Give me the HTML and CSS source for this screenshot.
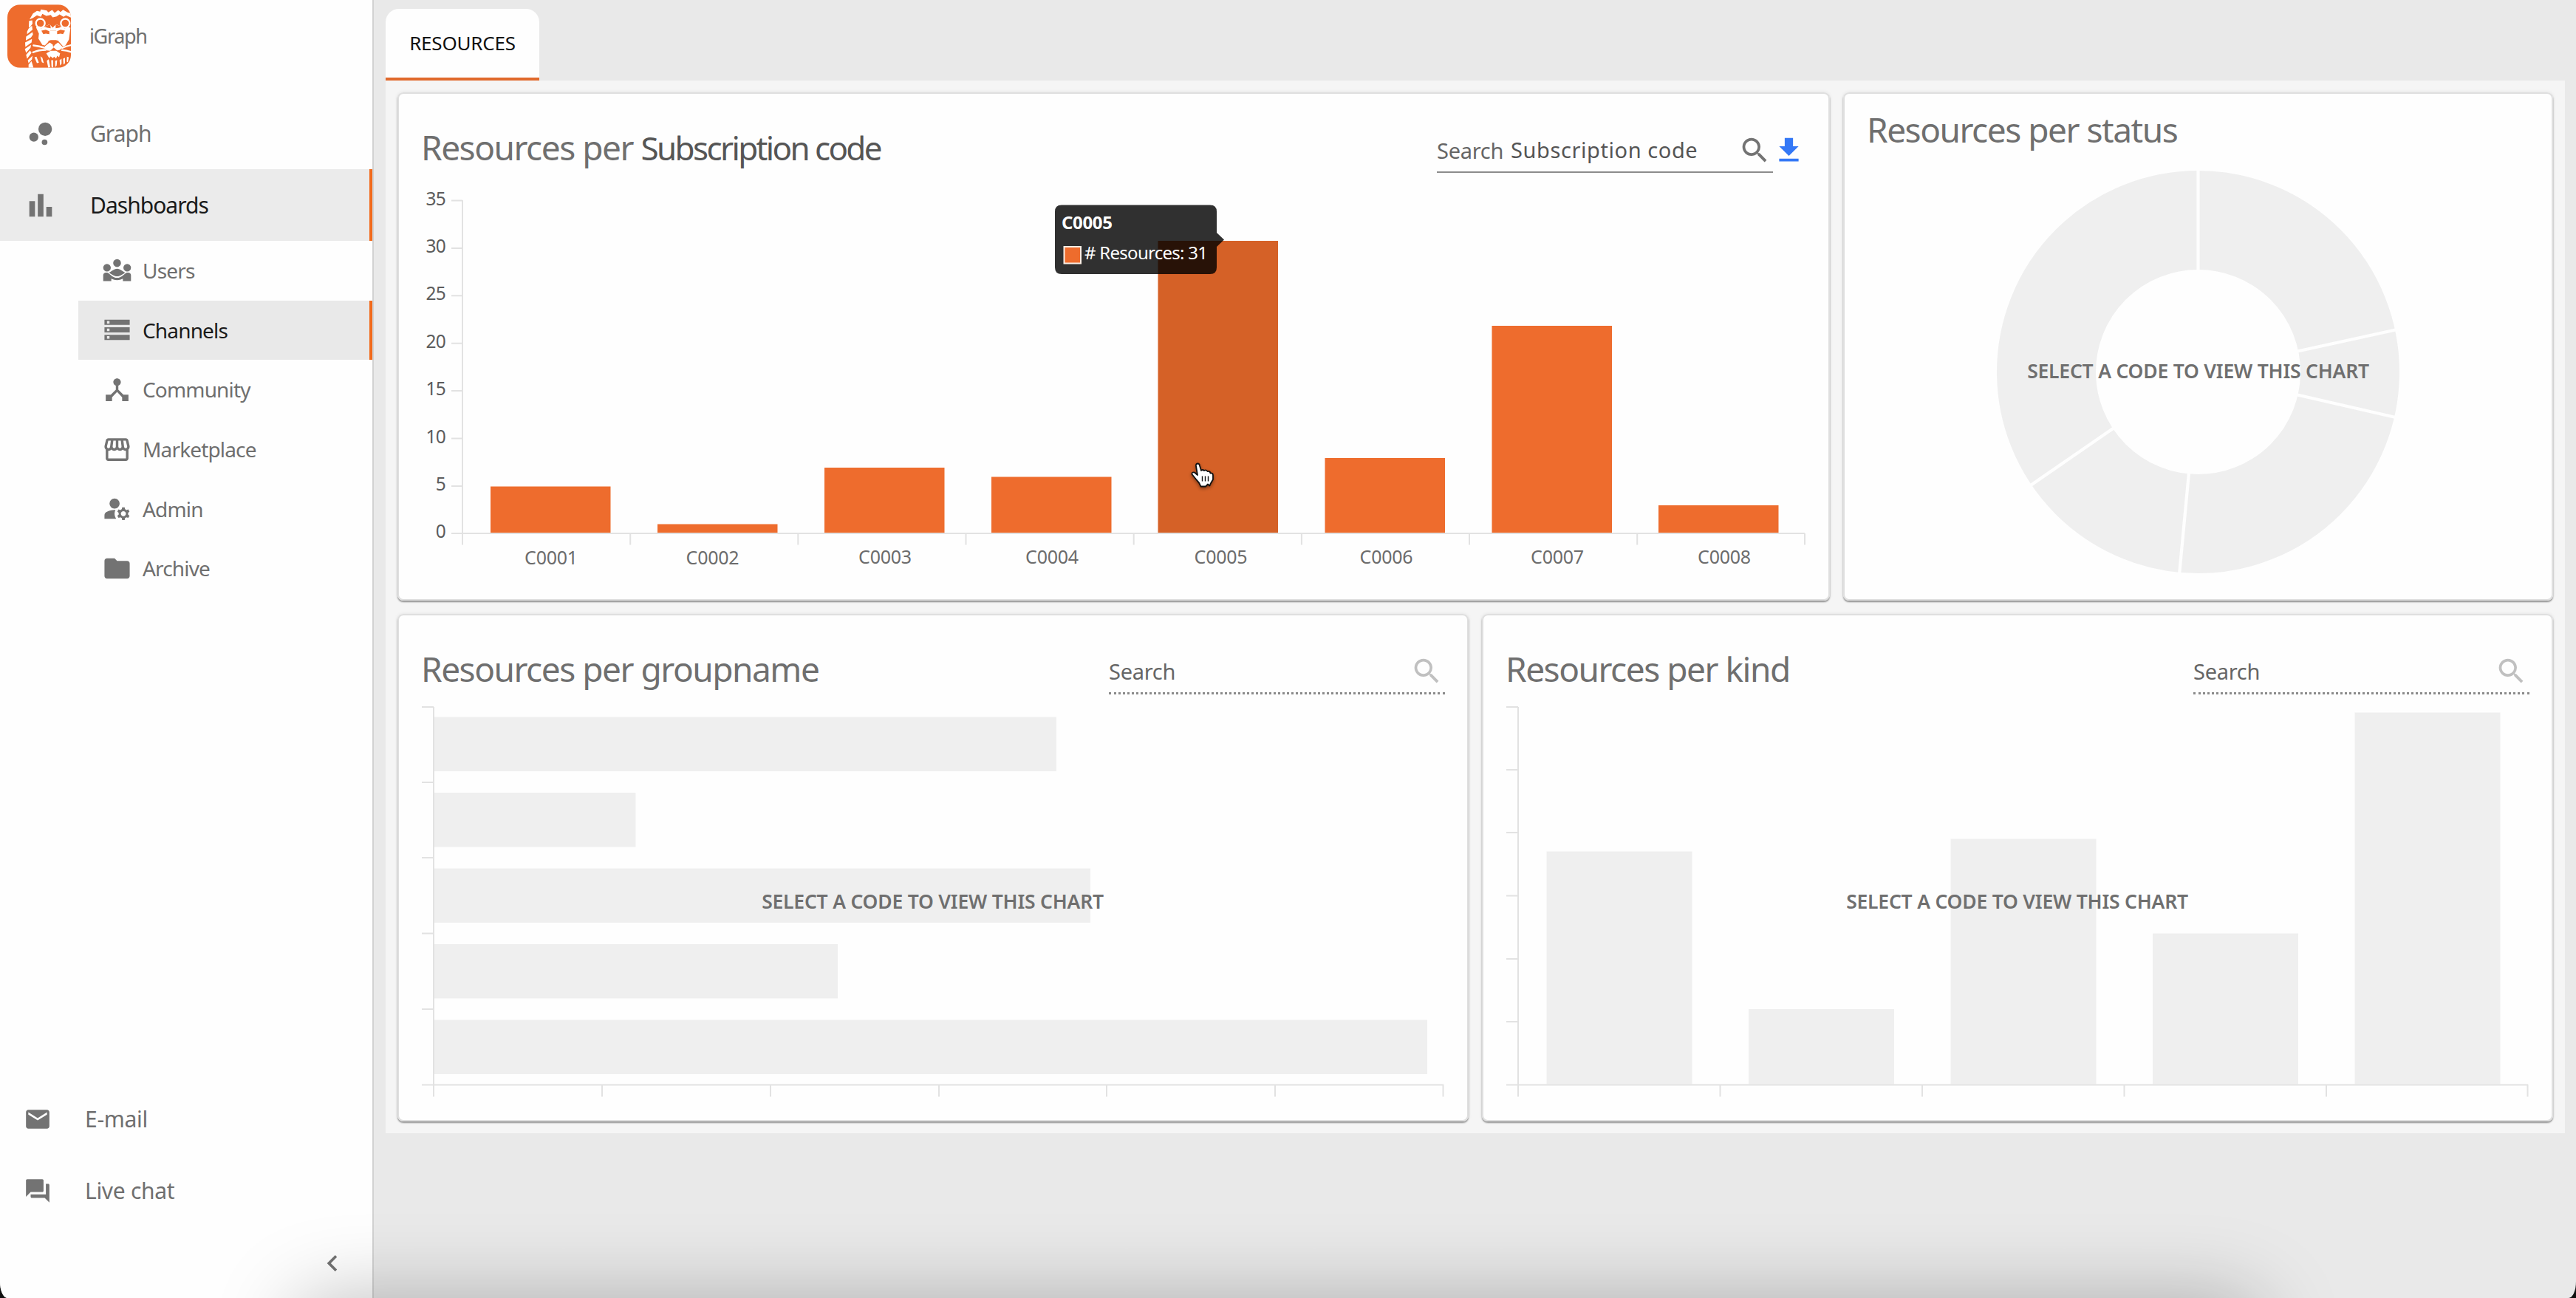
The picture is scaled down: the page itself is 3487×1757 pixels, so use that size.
FILE: index.html
```html
<!DOCTYPE html>
<html lang="en">
<head>
<meta charset="utf-8">
<title>iGraph</title>
<link rel="stylesheet" href="styles.css">
</head>
<body>
<div class="app">
  <aside class="sidebar">
    <div class="brand">
      <svg class="logo" viewBox="30 18 258 257">
        <defs><clipPath id="tile"><rect x="30" y="18" width="258" height="257" rx="52"/></clipPath></defs>
        <g clip-path="url(#tile)">
          <rect x="30" y="18" width="258" height="257" fill="#ee6c2d"/>
          <g fill="#fff">
            <path d="M120 78L134 54L150 44L163 47L166 38L190 42L196 50L212 40L222 52L236 41L246 48L256 39L274 50L290 54L290 72L268 62L258 68L242 58L230 66L214 70L206 60L188 64L172 56L166 68L150 62L134 72Z"/>
            <path d="M118 84L131 82L132 96L120 112L117 108ZM116 116L130 104L132 120L110 138L110 128ZM106 148L132 130L134 140L126 152L105 164ZM102 172L130 158L128 172L103 190ZM101 198L126 182L124 194L106 214ZM106 222L122 204L128 214L110 238ZM113 244L132 226L130 240L116 256ZM116 262L128 248L136 275L116 275Z"/>
            <path d="M146 110L160 106L166 116L184 106L202 98L214 112L228 98L246 106L264 116L272 108L286 112L280 160L266 184L256 188L240 170L232 160L228 124L204 124L202 160L194 172L182 184L172 182L156 156L158 136Z"/>
            <path d="M204 124H230L234 164L216 172L198 164Z"/>
            <path d="M182 188L202 172L214 180L216 190L224 180L236 172L254 190L244 202L232 204L218 192L204 206L190 204Z"/>
            <path d="M188 216L206 206H228L244 216L240 232L232 226L228 237L220 230L214 236L206 228L200 236L194 226Z"/>
            <path d="M140 232L148 230L158 254L150 256ZM164 228L172 234L178 256L170 252ZM190 246L198 240L204 272L196 275ZM208 244L216 244L216 275L209 270ZM224 246L232 244L230 266L224 272ZM242 244L250 238L250 258L244 266ZM256 238L264 234L264 256L258 262ZM272 230L279 232L276 252L271 250Z"/>
          </g>
          <g fill="none" stroke="#fff" stroke-width="7" stroke-linecap="round">
            <circle cx="164" cy="94" r="18"/><circle cx="265" cy="94" r="18"/>
            <path d="M136 184Q158 186 184 194M134 212Q158 202 186 202M252 194Q270 186 292 182M252 203Q272 204 292 212"/>
          </g>
          <g fill="#ee6c2d">
            <path d="M168 124L186 120L200 126L200 138L186 136L176 138Z"/><path d="M232 126L246 120L264 124L256 138L246 136L232 138Z"/>
            <path d="M196 166L206 162H228L236 166L218 182Z"/>
            <path d="M180 108L204 98L206 114L192 112ZM226 98L250 108L240 112L226 114Z"/>
          </g>
        </g>
      </svg>
      <span class="brand-name">iGraph</span>
    </div>
    <nav class="nav">
      <a class="nav-item">
        <svg class="icon" viewBox="0 0 24 24"><circle cx="7.2" cy="14.4" r="3.2"/><circle cx="14.8" cy="18" r="2"/><circle cx="15.2" cy="8.8" r="4.8"/></svg>
        <span>Graph</span>
      </a>
      <a class="nav-item active">
        <svg class="icon" viewBox="0 0 24 24"><path d="M4 9h4v11H4zM16 13h4v7h-4zM10 4h4v16h-4z"/></svg>
        <span>Dashboards</span>
      </a>
      <div class="subnav">
        <a class="sub-item">
          <svg class="icon" viewBox="0 0 24 24"><circle cx="4" cy="9.6" r="3"/><circle cx="12" cy="5.9" r="3.1"/><circle cx="20" cy="9.6" r="3"/><path d="M5.6 13.6C8 12 10 10.4 12 10.4s4 1.600 6.400 3.200C16.500 14.600 14.500 16.400 12 16.400s-4.500-1.800-6.400-2.800z"/><path d="M1 20.200V15.500C1 14.200 2 13.400 3.200 13.400H4.200C6 14 8.500 17.600 12 17.600s6-3.600 7.800-4.200H20.800C22 13.400 23 14.200 23 15.500V20.200H16.600V18.300Q12 20.600 7.400 18.300V20.200Z"/></svg>
          <span>Users</span>
        </a>
        <a class="sub-item active">
          <svg class="icon" viewBox="0 0 24 24"><path d="M2 20h20v-4H2v4zm2-3h2v2H4v-2zM2 4v4h20V4H2zm4 3H4V5h2v2zm-4 7h20v-4H2v4zm2-3h2v2H4v-2z"/></svg>
          <span>Channels</span>
        </a>
        <a class="sub-item">
          <svg class="icon" viewBox="0 0 24 24"><path d="M17 16l-4-4V8.82C14.16 8.4 15 7.3 15 6c0-1.66-1.34-3-3-3S9 4.340 9 6c0 1.300.84 2.400 2 2.820V12l-4 4H3v5h5v-3.050l4-4.200 4 4.200V21h5v-5h-4z"/></svg>
          <span>Community</span>
        </a>
        <a class="sub-item">
          <svg class="icon" viewBox="0 0 24 24"><path d="M21.9 8.89l-1.05-4.37c-.22-.9-1-1.52-1.91-1.52H5.05c-.9 0-1.69.63-1.9 1.52L2.100 8.890c-.24 1.020-.02 2.060.62 2.880.08.11.19.19.28.29V19c0 1.100.9 2 2 2h14c1.100 0 2-.9 2-2v-6.940c.09-.09.2-.18.28-.28.64-.82.87-1.870.62-2.890zm-2.990-3.900l1.050 4.370c.1.420.01.840-.25 1.170-.14.180-.44.470-.94.470-.61 0-1.140-.49-1.210-1.140L16.980 5l1.930-.01zM13 5h1.960l.54 4.520c.05.390-.07.780-.33 1.070-.22.260-.54.410-.95.410-.67 0-1.220-.59-1.220-1.310V5zM8.490 9.520L9.040 5H11v4.690c0 .72-.55 1.310-1.290 1.310-.34 0-.65-.15-.89-.41-.25-.29-.37-.68-.33-1.070zm-4.450-.16L5.050 5h1.970l-.58 4.860c-.08.650-.6 1.140-1.210 1.140-.49 0-.8-.29-.93-.47-.27-.32-.36-.75-.26-1.170zM5 19v-6.030c.08.010.15.030.23.030.87 0 1.660-.36 2.240-.95.600.600 1.400.95 2.310.95.87 0 1.650-.36 2.230-.93.59.570 1.390.930 2.290.930.84 0 1.640-.35 2.240-.95.58.590 1.370.950 2.240.950.08 0 .15-.02.23-.03V19H5z"/></svg>
          <span>Marketplace</span>
        </a>
        <a class="sub-item">
          <svg class="icon" viewBox="0 0 24 24"><circle cx="10" cy="8" r="4"/><path d="M10.670 13.020C10.450 13.010 10.230 13 10 13c-2.420 0-4.680.67-6.610 1.820-.88.52-1.390 1.500-1.390 2.530V20h9.260c-.79-1.130-1.260-2.510-1.260-4 0-1.070.25-2.070.67-2.980zM20.750 16c0-.22-.03-.42-.06-.63l1.140-1.010-1-1.730-1.450.49c-.32-.27-.68-.48-1.080-.63L18 11h-2l-.3 1.490c-.4.150-.76.360-1.080.630l-1.450-.49-1 1.730 1.140 1.010c-.03.210-.06.410-.06.630s.03.420.06.630l-1.140 1.010 1 1.730 1.450-.49c.32.270.68.480 1.080.630L16 21h2l.3-1.490c.4-.15.76-.36 1.080-.63l1.450.49 1-1.730-1.140-1.010c.03-.21.06-.41.06-.63zM17 18c-1.100 0-2-.9-2-2s.9-2 2-2 2 .9 2 2-.9 2-2 2z"/></svg>
          <span>Admin</span>
        </a>
        <a class="sub-item">
          <svg class="icon" viewBox="0 0 24 24"><path d="M10 4H4c-1.100 0-1.990.9-1.990 2L2 18c0 1.100.9 2 2 2h16c1.100 0 2-.9 2-2V8c0-1.100-.9-2-2-2h-8l-2-2z"/></svg>
          <span>Archive</span>
        </a>
      </div>
    </nav>
    <div class="contact">
      <a class="contact-item">
        <svg class="icon" viewBox="0 0 24 24"><path d="M20 4H4c-1.100 0-1.990.9-1.990 2L2 18c0 1.100.9 2 2 2h16c1.100 0 2-.9 2-2V6c0-1.100-.9-2-2-2zm0 4l-8 5-8-5V6l8 5 8-5v2z"/></svg>
        <span>E-mail</span>
      </a>
      <a class="contact-item">
        <svg class="icon" viewBox="0 0 24 24"><path d="M21 6h-2v9H6v2c0 .55.45 1 1 1h11l4 4V7c0-.55-.45-1-1-1zm-4 6V3c0-.55-.45-1-1-1H3c-.55 0-1 .45-1 1v14l4-4h10c.55 0 1-.45 1-1z"/></svg>
        <span>Live chat</span>
      </a>
      <div class="collapse">
        <svg class="icon" viewBox="0 0 24 24"><path d="M15.410 7.410L14 6l-6 6 6 6 1.410-1.410L10.830 12z"/></svg>
      </div>
    </div>
  </aside>

  <main class="main">
    <div class="tabs"><div class="tab"><span>RESOURCES</span></div></div>
    <div class="panel">
      <div class="row row-top">
        <section class="card">
          <header class="card-head">
            <h2 class="title"><span>Resources per</span> <span class="title-code">Subscription code</span></h2>
            <div class="tools">
              <div class="search search-on">
                <span>Search</span><span class="search-code">Subscription code</span>
                <svg class="icon" viewBox="0 0 24 24"><path d="M15.500 14h-.79l-.28-.27A6.471 6.471 0 0 0 16 9.500 6.500 6.500 0 1 0 9.500 16c1.610 0 3.090-.59 4.230-1.570l.27.280v.790l5 4.990L20.490 19l-4.990-5zm-6 0C7.010 14 5 11.990 5 9.500S7.010 5 9.500 5 14 7.010 14 9.500 11.990 14 9.500 14z"/></svg>
              </div>
              <svg class="icon download" viewBox="0 0 24 24"><path d="M19 9h-4V3H9v6H5l7 7 7-7zM5 18v2h14v-2H5z"/></svg>
            </div>
          </header>
          <svg class="chart" viewBox="570 234 1875 560" width="1875" height="560">
            <path class="axis" d="M626 271V737.500M611 722H2443M611 271.500H626M611 335.900H626M611 400.300H626M611 464.700H626M611 529.100H626M611 593.500H626M611 657.900H626M853.200 722V737.500M1080.300 722V737.500M1307.500 722V737.500M1534.700 722V737.500M1761.900 722V737.500M1989 722V737.500M2216.200 722V737.500M2443 722V737.500"/>
            <g class="bars">
              <rect x="664" y="658.500" width="162.500" height="62.500"/>
              <rect x="890" y="709.500" width="162.500" height="11.500"/>
              <rect x="1116" y="633" width="162.500" height="88"/>
              <rect x="1342" y="645.500" width="162.500" height="75.500"/>
              <rect class="hover" x="1567.500" y="326" width="162.500" height="395"/>
              <rect x="1793.500" y="620" width="162.500" height="101"/>
              <rect x="2019.500" y="441" width="162.500" height="280"/>
              <rect x="2245" y="684" width="162.500" height="37"/>
            </g>
            <g class="y-labels">
              <text x="603" y="277.500">35</text><text x="603" y="342">30</text><text x="603" y="406.300">25</text><text x="603" y="470.700">20</text><text x="603" y="535">15</text><text x="603" y="599.500">10</text><text x="603" y="663.500">5</text><text x="603" y="728">0</text>
            </g>
            <g class="x-labels">
              <text x="746" y="764">C0001</text><text x="964.500" y="764">C0002</text><text x="1198" y="763">C0003</text><text x="1424" y="763">C0004</text><text x="1652.500" y="763">C0005</text><text x="1876.500" y="763">C0006</text><text x="2108" y="763">C0007</text><text x="2334" y="763">C0008</text>
            </g>
            <g class="tooltip">
              <path d="M1437 277.500H1638Q1647 277.500 1647 286.500V315L1657 324.500L1647 334V362Q1647 371 1638 371H1437Q1428 371 1428 362V286.500Q1428 277.500 1437 277.500Z"/>
              <text class="tip-title" x="1437" y="309.500">C0005</text>
              <rect x="1440.500" y="334" width="22.500" height="22.500"/>
              <text class="tip-text" x="1468" y="351"># Resources: 31</text>
            </g>
            <g class="pointer">
              <path d="M1620 650L1613.500 642Q1613 638.500 1617 639.500L1621 643L1619 631Q1618.500 627.500 1621.500 627.500Q1623.500 627.500 1624 630.500L1626 637Q1627.500 635 1630 637Q1632.500 635.500 1634.500 638Q1638 637.500 1638.500 640.500Q1642 640 1642 643.500V649L1638.500 655L1637.500 657.500L1635 655.500L1632 658.500H1625.500Q1623.500 653 1620 650Z"/>
              <path d="M1627.500 644.500V651.500M1631.500 644.500V651.500M1635.500 644.500V651.500"/>
            </g>
          </svg>
        </section>

        <section class="card card-status">
          <header class="card-head"><h2 class="title">Resources per status</h2></header>
          <svg class="chart" viewBox="2527 225 897 560" width="897" height="560">
            <circle cx="2975.500" cy="503.500" r="205.500" fill="none" stroke="#efefef" stroke-width="134"/>
            <path d="M2975.500 225V366M3110 475.500L3245 446M3110 534.500L3245 565.500M2963 640L2950 778M2861 579.500L2748 657.500" stroke="#fefefe" stroke-width="4.200"/>
            <text class="hint" x="2975.500" y="512">SELECT A CODE TO VIEW THIS CHART</text>
          </svg>
        </section>
      </div>

      <div class="row row-bottom">
        <section class="card">
          <header class="card-head">
            <h2 class="title">Resources per groupname</h2>
            <div class="search">
              <span>Search</span>
              <svg class="icon" viewBox="0 0 24 24"><path d="M15.500 14h-.79l-.28-.27A6.471 6.471 0 0 0 16 9.500 6.500 6.500 0 1 0 9.500 16c1.610 0 3.090-.59 4.230-1.570l.27.280v.790l5 4.990L20.490 19l-4.990-5zm-6 0C7.010 14 5 11.990 5 9.500S7.010 5 9.500 5 14 7.010 14 9.500 11.990 14 9.500 14z"/></svg>
            </div>
          </header>
          <svg class="chart" viewBox="570 940 1386 560" width="1386" height="560">
            <g fill="#efefef">
              <rect x="588" y="970.500" width="842" height="73.500"/>
              <rect x="588" y="1073" width="272.500" height="73.500"/>
              <rect x="588" y="1175.500" width="888" height="73.500"/>
              <rect x="588" y="1278" width="546" height="73.500"/>
              <rect x="588" y="1380.500" width="1344" height="73.500"/>
            </g>
            <path class="axis" d="M587 957V1484.500M571 1468.500H1954M571 957H587M571 1059H587M571 1161H587M571 1263.500H587M571 1366H587M815 1468V1484.500M1043 1468V1484.500M1271 1468V1484.500M1498 1468V1484.500M1726 1468V1484.500M1953.500 1468V1484.500"/>
            <text class="hint" x="1262.500" y="1230">SELECT A CODE TO VIEW THIS CHART</text>
          </svg>
        </section>

        <section class="card">
          <header class="card-head">
            <h2 class="title">Resources per kind</h2>
            <div class="search">
              <span>Search</span>
              <svg class="icon" viewBox="0 0 24 24"><path d="M15.500 14h-.79l-.28-.27A6.471 6.471 0 0 0 16 9.500 6.500 6.500 0 1 0 9.500 16c1.610 0 3.090-.59 4.230-1.570l.27.280v.790l5 4.990L20.490 19l-4.990-5zm-6 0C7.010 14 5 11.990 5 9.500S7.010 5 9.500 5 14 7.010 14 9.500 11.990 14 9.500 14z"/></svg>
            </div>
          </header>
          <svg class="chart" viewBox="2038 940 1386 560" width="1386" height="560">
            <g fill="#efefef">
              <rect x="2093.500" y="1152.500" width="197" height="315"/>
              <rect x="2367" y="1366" width="197" height="101.500"/>
              <rect x="2640.500" y="1135.500" width="197" height="332"/>
              <rect x="2914" y="1263.500" width="197" height="204"/>
              <rect x="3187.500" y="964.500" width="197" height="503"/>
            </g>
            <path class="axis" d="M2055 957V1484.500M2039 1468.500H3422M2039 957H2055M2039 1042H2055M2039 1127H2055M2039 1212.500H2055M2039 1298H2055M2039 1383H2055M2328.500 1468V1484.500M2602 1468V1484.500M2875.500 1468V1484.500M3149 1468V1484.500M3421.500 1468V1484.500"/>
            <text class="hint" x="2730.500" y="1230">SELECT A CODE TO VIEW THIS CHART</text>
          </svg>
        </section>
      </div>
    </div>
  </main>
  <div class="edge-shade"></div>
</div>
</body>
</html>
```
FILE: styles.css
```css
* { box-sizing: border-box; }

body {
  margin: 0;
  background: #111;
  color: #6f6f6f;
  font-family: "Noto Sans", sans-serif;
}

.app {
  position: relative;
  display: flex;
  width: 3487px;
  height: 1757px;
  overflow: hidden;
  background: #e9e9e9;
  border-radius: 0 0 10px 10px / 0 0 22px 22px;
}

.icon { flex: none; fill: #737373; }

/* Sidebar */
.sidebar {
  display: flex;
  flex-direction: column;
  width: 506px;
  background: #fefefe;
  border-right: 2px solid #d2d2d2;
}

.brand {
  display: flex;
  align-items: flex-start;
  gap: 25px;
  height: 132px;
  padding: 6px 10px;
}

.logo { width: 86px; height: 86px; }

.brand-name {
  font-size: 27px;
  line-height: 86px;
  letter-spacing: -0.05em;
}

.nav-item {
  display: flex;
  align-items: center;
  gap: 44px;
  height: 97px;
  padding-left: 32px;
  font-size: 30px;
  letter-spacing: -0.033em;
}

.nav-item .icon { width: 46px; height: 46px; }

.active {
  background: #ebebeb;
  border-right: 4px solid #f26a1b;
  color: #1a1a1a;
}

.subnav { padding-left: 106px; }

.sub-item {
  display: flex;
  align-items: center;
  gap: 14px;
  height: 80.6px;
  padding-left: 32px;
  font-size: 28px;
  letter-spacing: -0.03em;
}

.sub-item .icon { width: 41px; height: 41px; }
.sub-item.active { background: #e9e9e9; }

.contact { margin-top: auto; }

.contact-item {
  display: flex;
  align-items: center;
  gap: 45px;
  height: 97px;
  padding-left: 32px;
  font-size: 30px;
  letter-spacing: -0.01em;
}

.contact-item .icon { width: 38px; height: 38px; }

.collapse {
  display: flex;
  align-items: center;
  justify-content: flex-end;
  height: 97px;
  padding: 3px 32px 0 0;
}

.collapse .icon { width: 44px; height: 44px; }

/* Main area */
.main { flex: 1; padding: 12px 15px 0 16px; }

.tab {
  display: flex;
  align-items: center;
  justify-content: center;
  width: 208px;
  height: 97px;
  padding-bottom: 1px;
  background: #fefefe;
  border-bottom: 4px solid #e0692c;
  border-radius: 18px 18px 0 0;
  color: #111;
  font-size: 26px;
  letter-spacing: -0.008em;
}

.panel {
  display: flex;
  flex-direction: column;
  gap: 18px;
  height: 1425px;
  padding: 16px;
  background: #f5f5f5;
}

.row { display: grid; gap: 18px; }
.row-top { grid-template-columns: 1939px 961px; height: 689px; }
.row-bottom { grid-template-columns: 1fr 1fr; height: 689px; }

.card {
  padding: 0 32px;
  background: #fefefe;
  border-radius: 8px;
  box-shadow: inset 0 0 0 2px #dfdfdf, 0 2px 2px rgba(0, 0, 0, 0.4), 0 0 5px rgba(0, 0, 0, 0.08);
}

.card-head {
  display: flex;
  justify-content: space-between;
  height: 109px;
  padding-top: 41px;
}

.card-status .card-head { height: 100px; padding-top: 17px; }

.title {
  margin: 0;
  font-size: 46px;
  font-weight: 400;
  line-height: 66px;
  letter-spacing: -0.032em;
  white-space: nowrap;
}

.title-code {
  color: #555;
  font-size: 44px;
  letter-spacing: -0.06em;
}

.tools { display: flex; }

.search {
  display: flex;
  align-items: center;
  width: 455px;
  padding-top: 8px;
  border-bottom: 3px dotted #8a8a8a;
  color: #666;
  font-size: 29px;
  letter-spacing: -0.01em;
}

.search-on { border-bottom: 2px solid #8c8c8c; }
.search .icon { width: 45px; height: 45px; margin: 0 2px 0 auto; fill: #c0c0c0; }
.search-on .icon { fill: #737373; }
.search-code { margin-left: 10px; padding-bottom: 2px; color: #555; letter-spacing: 0.02em; }
.icon.download { width: 45px; height: 45px; margin: 15px 1px 0 -1px; fill: #3478f6; }

/* Charts */
.chart { display: block; overflow: visible; }
.axis { fill: none; stroke: #e2e2e2; stroke-width: 2; }
.bars rect { fill: #ee6c2d; }
.bars .hover { fill: #d56127; }
.y-labels, .x-labels { fill: #5c5c5c; font-size: 24.5px; letter-spacing: -0.03em; }
.y-labels { text-anchor: end; }
.x-labels { fill: #6c6c6c; font-size: 25px; text-anchor: middle; letter-spacing: -0.01em; }

.hint {
  fill: #6f6f6f;
  font-size: 26.5px;
  font-weight: 600;
  letter-spacing: -0.008em;
  text-anchor: middle;
}

.tooltip path { fill: rgba(0, 0, 0, 0.81); }
.tooltip rect { fill: #ee6c2d; stroke: #fdeee4; stroke-width: 2; }
.tooltip text { fill: #fff; font-size: 24px; letter-spacing: -0.03em; }
.tooltip .tip-title { font-weight: 700; letter-spacing: -0.015em; }

.pointer path:first-child { fill: #fff; stroke: #111; stroke-width: 1.8; stroke-linejoin: round; }
.pointer path:last-child { fill: none; stroke: #111; stroke-width: 1.4; }
.pointer { filter: drop-shadow(0 2px 2px rgba(0, 0, 0, 0.4)); }

/* Soft shade rising from the bottom edge */
.edge-shade {
  position: absolute;
  top: 1757px;
  left: 400px;
  width: 2660px;
  height: 200px;
  border-radius: 40px;
  box-shadow: 0 0 110px rgba(0, 0, 0, 0.26);
  pointer-events: none;
}
```
